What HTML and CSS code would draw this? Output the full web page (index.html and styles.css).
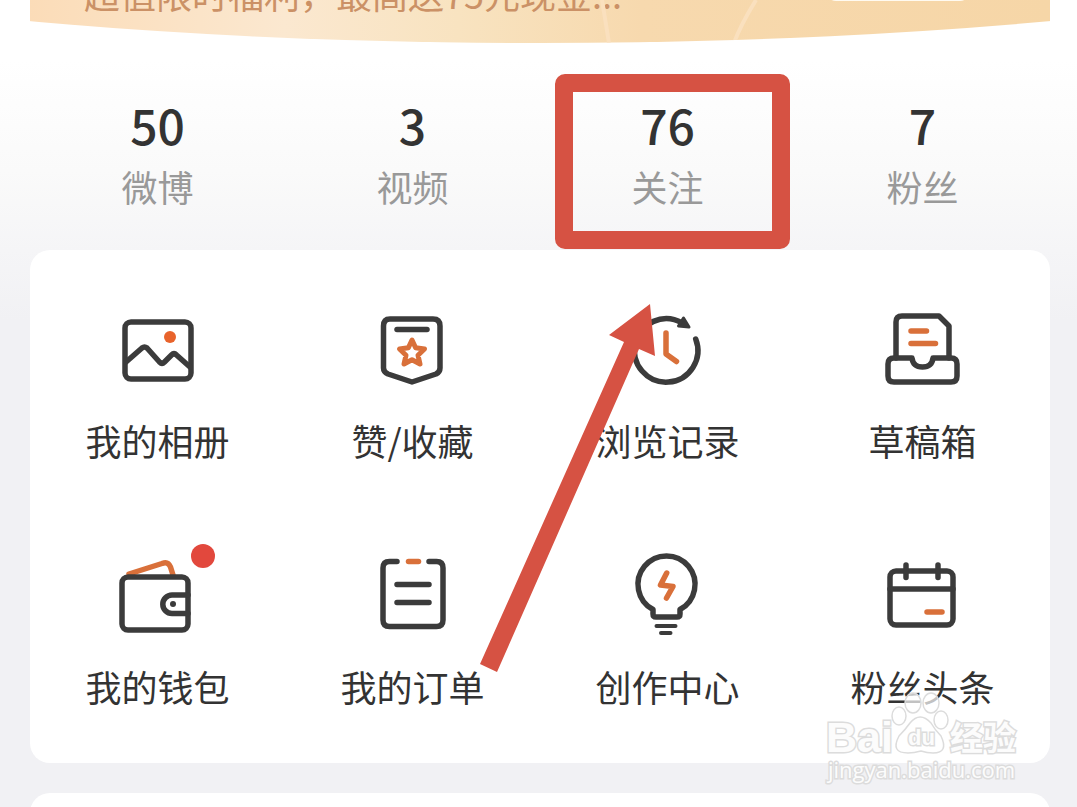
FILE: index.html
```html
<!DOCTYPE html>
<html lang="zh-CN">
<head>
  <meta charset="UTF-8">
  <meta name="viewport" content="width=device-width, initial-scale=1.0">
  <title>我</title>
  <link rel="stylesheet" href="styles.css">
</head>
<body>

  <div class="banner">
    <svg class="rays" viewBox="0 0 200 43" aria-hidden="true">
      <path d="M28 0L35 43"/>
      <path d="M182 0Q166 26 160 43"/>
    </svg>
    <span class="banner-text">超值限时福利，最高送75元现金...</span>
    <span class="banner-pill"></span>
  </div>

  <nav class="stats">
    <a class="stat" href="#"><span class="count">50</span><span class="name">微博</span></a>
    <a class="stat" href="#"><span class="count">3</span><span class="name">视频</span></a>
    <a class="stat marked" href="#"><span class="count">76</span><span class="name">关注</span></a>
    <a class="stat" href="#"><span class="count">7</span><span class="name">粉丝</span></a>
  </nav>

  <main class="card">
    <div class="menu">
      <a class="item" href="#">
        <svg class="icon" viewBox="0 0 84 84">
          <rect x="9" y="16" width="66" height="57" rx="6"/>
          <path d="M10 56L26 42Q28.500 40 31 42L43.500 56Q46 58.500 48.500 56L55.500 49Q58 46.500 60.500 49L74 61"/>
          <circle class="solid-accent" cx="54" cy="31" r="6"/>
        </svg>
        <span class="label">我的相册</span>
      </a>
      <a class="item" href="#">
        <svg class="icon" viewBox="0 0 84 84">
          <path d="M19 13H62Q69 13 69 20V62Q69 66 65 68L41 76L17 68Q12.500 66 12.500 62V20Q12.500 13 19 13Z"/>
          <path d="M26 23.500H56"/>
          <path class="accent star" d="M41 34L44.600 41.700L53.500 43L47 49.200L49 58L41 53.700L33 58L35 49.200L28.500 43L37.400 41.700Z"/>
        </svg>
        <span class="label">赞/收藏</span>
      </a>
      <a class="item" href="#">
        <svg class="icon" viewBox="0 0 84 84">
          <path d="M69.700 33A31.700 31.700 0 1 1 56 17"/>
          <path class="solid" d="M57.500 12L63 21L52.500 20Z"/>
          <path class="accent" d="M40 27V48L50.500 55.500"/>
        </svg>
        <span class="label">浏览记录</span>
      </a>
      <a class="item" href="#">
        <svg class="icon" viewBox="0 0 84 84">
          <path d="M15 52V16Q15 10 21 10H58L68 20V52"/>
          <path d="M13 52H31Q32 61 41.500 61T52 52H70Q76 52 76 58V70Q76 76 70 76H13Q7 76 7 70V58Q7 52 13 52Z"/>
          <path class="accent" d="M30 25H45.500M30 37.500H54.500"/>
        </svg>
        <span class="label">草稿箱</span>
      </a>
      <a class="item" href="#">
        <span class="icon-wrap">
          <svg class="icon" viewBox="0 0 84 84">
            <path class="accent" d="M13 22L46 11.500Q52 9 54.500 15L57 23"/>
            <rect x="6" y="25" width="66" height="53" rx="6"/>
            <path d="M72 43H56A9.200 9.200 0 0 0 56 61.400H72"/>
            <circle class="dot" cx="57" cy="52" r="3"/>
          </svg>
          <span class="badge"></span>
        </span>
        <span class="label">我的钱包</span>
      </a>
      <a class="item" href="#">
        <svg class="icon" viewBox="0 0 84 84">
          <path d="M26 9.500H18.500Q12 9.500 12 16V68Q12 74.500 18.500 74.500H65.500Q72 74.500 72 68V16Q72 9.500 65.500 9.500H58"/>
          <path d="M26 32.500H58M26 50.500H58"/>
          <path class="accent" d="M37.500 9.500H47.500"/>
        </svg>
        <span class="label">我的订单</span>
      </a>
      <a class="item" href="#">
        <svg class="icon" viewBox="0 0 84 84">
          <path d="M27 57.500A28.500 28.500 0 1 1 54 57.500V62Q54 65 51 65H30Q27 65 27 62Z"/>
          <path class="thin" d="M30.500 74H49.500M35 81H44.500"/>
          <path class="accent" d="M40.700 21L34.500 33L47 34.500L40.500 46"/>
        </svg>
        <span class="label">创作中心</span>
      </a>
      <a class="item" href="#">
        <svg class="icon" viewBox="0 0 84 84">
          <rect x="9" y="19" width="63" height="54" rx="6"/>
          <path d="M9 37H72M25 13V25.500M57 13V25.500"/>
          <path class="accent" d="M46 60H61"/>
        </svg>
        <span class="label">粉丝头条</span>
      </a>
    </div>

    <svg class="arrow" viewBox="0 0 176 368" aria-hidden="true">
      <path d="M170 0L175 52L159 45L17 368L0 360L144 38L129 31Z"/>
    </svg>
  </main>

  <section class="card next"></section>

  <svg class="watermark" viewBox="0 -8 200 98" aria-hidden="true">
    <text class="wm-logo" x="2" y="55">Bai</text>
    <ellipse cx="75" cy="19" rx="7" ry="9"/>
    <ellipse cx="89" cy="6" rx="8" ry="10"/>
    <ellipse cx="107" cy="6" rx="8" ry="10"/>
    <ellipse cx="117" cy="23" rx="7" ry="9"/>
    <path d="M86 26Q96 14 107 26Q111 33 117 39Q125 56 109 56Q103 56 97 54Q90 56 84 56Q66 56 75 39Q81 33 86 26Z"/>
    <text class="wm-du" x="84" y="48">du</text>
    <text class="wm-cn" x="126" y="53">经验</text>
    <text class="wm-url" x="4" y="81">jingyan.baidu.com</text>
  </svg>

</body>
</html>
```
FILE: styles.css
```css
* {
  box-sizing: border-box;
}

body {
  margin: 0;
  position: relative;
  height: 100vh;
  overflow: hidden;
  font-family: "Noto Sans CJK SC", sans-serif;
  color: #333;
  background: linear-gradient(#fff 60px, #fafafa 170px, #f5f5f7 250px, #f1f1f4 320px);
}

a {
  color: inherit;
  text-decoration: none;
}

/* promo banner, cut off by the top of the screen */
.banner {
  position: relative;
  display: flex;
  align-items: flex-end;
  justify-content: space-between;
  height: 43px;
  margin: 0 27px 0 30px;
  padding: 0 80px 26px 54px;
  background: linear-gradient(90deg, #fbdcb8, #fbe8d0 25%, #f8e3c0 42%, #f7d9ae 60%, #f6d6a7);
  clip-path: ellipse(1000px 157px at 50% -114px);
}

.banner-text {
  font-size: 36px;
  line-height: 48px;
  color: #cb9166;
  white-space: nowrap;
}

.banner-pill {
  width: 144px;
  height: 44px;
  margin-bottom: 16px;
  border-radius: 10px;
  background: #fffaf0;
}

.rays {
  position: absolute;
  top: 0;
  left: 544px;
  width: 200px;
  height: 43px;
  fill: none;
  stroke: #fae0be;
  stroke-width: 4;
}

/* counters */
.stats {
  display: grid;
  grid-template-columns: repeat(4, 1fr);
  margin: 0 27px 0 30px;
}

.stat {
  position: relative;
  display: flex;
  flex-direction: column;
  align-items: center;
  gap: 10px;
  padding: 53px 0 40px;
}

.count {
  font-size: 48px;
  font-weight: 500;
  line-height: 56px;
}

.name {
  font-size: 36px;
  line-height: 48px;
  color: #999;
}

.marked::after {
  content: "";
  position: absolute;
  inset: 31px 5px 1px 15px;
  border: 18px solid #d65243;
  border-radius: 10px;
}

/* menu */
.card {
  position: relative;
  margin: 0 27px 30px 30px;
  padding: 56px 0 53px;
  border-radius: 20px;
  background: #fff;
}

.next {
  height: 120px;
}

.menu {
  display: grid;
  grid-template-columns: repeat(4, 1fr);
  row-gap: 88px;
}

.item {
  display: flex;
  flex-direction: column;
  align-items: center;
  gap: 26px;
}

.label {
  font-size: 36px;
  line-height: 48px;
}

.icon {
  display: block;
  width: 84px;
  height: 84px;
  fill: none;
  stroke: #3b3b3b;
  stroke-width: 5.5;
  stroke-linecap: round;
  stroke-linejoin: round;
}

.icon .accent {
  stroke: #d9703a;
}

.icon .star {
  stroke-width: 5;
}

.icon .thin {
  stroke-width: 4;
}

.icon .solid {
  fill: #3b3b3b;
  stroke-width: 3;
}

.icon .solid-accent {
  fill: #e8632b;
  stroke: none;
}

.icon .dot {
  fill: #3b3b3b;
  stroke: none;
}

.icon-wrap {
  position: relative;
}

.badge {
  position: absolute;
  top: -8px;
  right: -15px;
  width: 24px;
  height: 24px;
  border-radius: 50%;
  background: #e2483d;
}

.arrow {
  position: absolute;
  top: 54px;
  left: 450px;
  width: 176px;
  height: 368px;
  fill: #d65243;
}

/* watermark */
.watermark {
  position: absolute;
  right: 53px;
  bottom: 20px;
  width: 200px;
  height: 98px;
  fill: rgba(255, 255, 255, 0.7);
  stroke: #dcdcdc;
  stroke-width: 1.5;
}

.watermark text {
  fill: #fcfcfc;
  paint-order: stroke;
  stroke-width: 3;
}

.wm-logo {
  font: bold 43px "Liberation Sans", sans-serif;
}

.wm-du {
  font: bold 22px "Liberation Sans", sans-serif;
}

.wm-cn {
  font: bold 33px "Noto Sans CJK SC", sans-serif;
}

.wm-url {
  font: 500 22px "Open Sans", sans-serif;
}
```
